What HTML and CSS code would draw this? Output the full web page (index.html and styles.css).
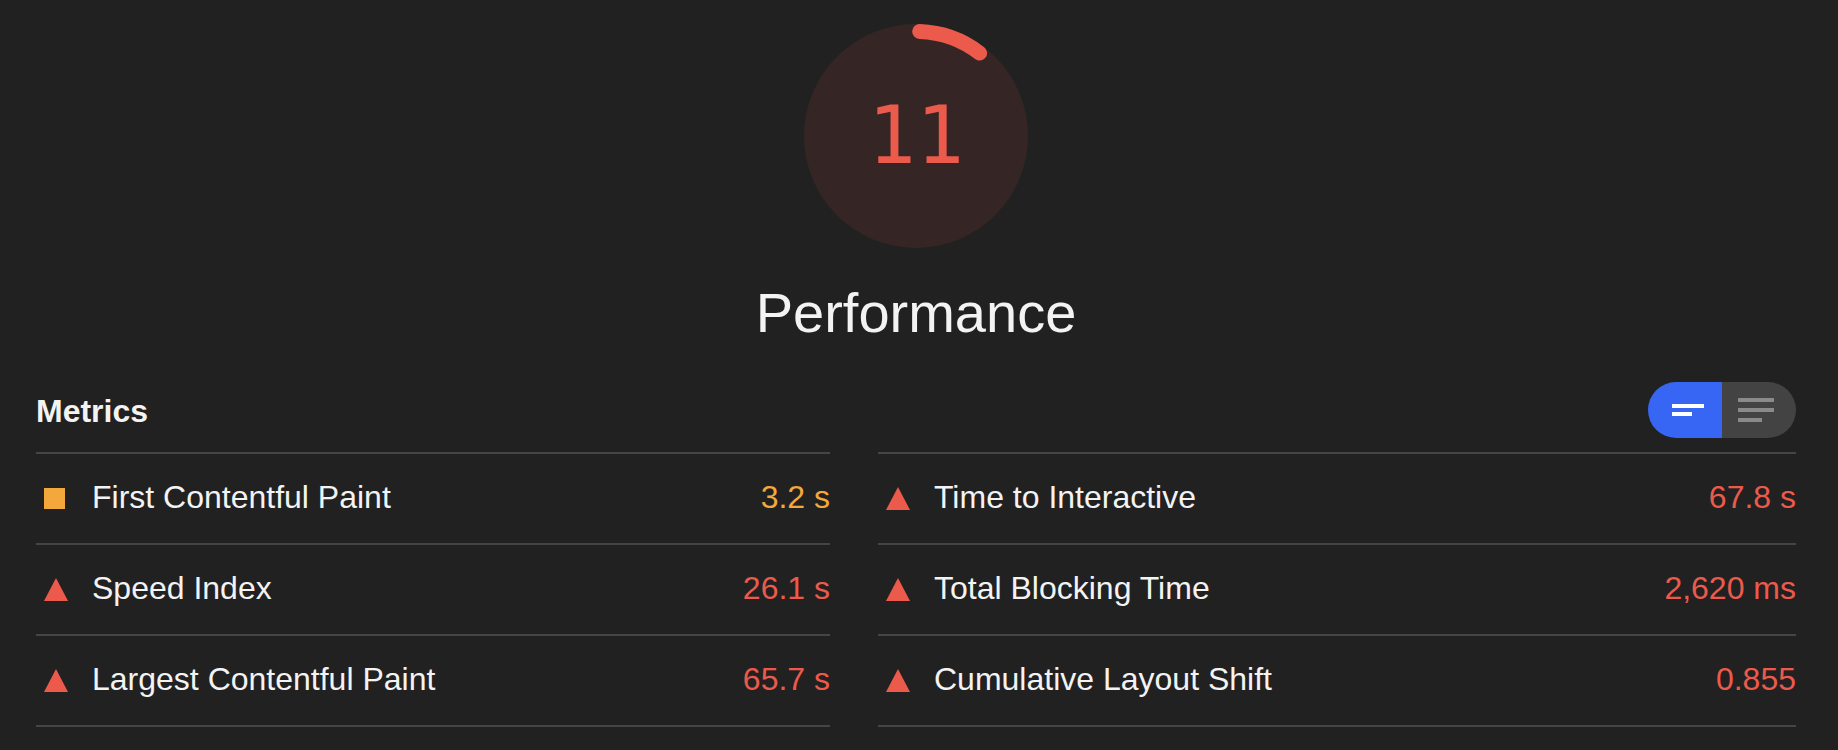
FILE: index.html
```
<!DOCTYPE html>
<html lang="en">
<head>
<meta charset="utf-8">
<title>Performance</title>
<link rel="stylesheet" href="styles.css">
</head>
<body>
<div class="report">
  <div class="gauge">
    <svg class="gauge-svg" viewBox="0 0 120 120" width="224" height="224">
      <circle cx="60" cy="60" r="60" class="gauge-base"/>
      <path d="M61.95 4.03 A56 56 0 0 1 94.09 15.57" class="gauge-arc"/>
    </svg>
    <div class="gauge-score">11</div>
  </div>
  <h1 class="title">Performance</h1>
  <div class="metrics-header">
    <h2 class="metrics-title">Metrics</h2>
    <div class="toggle">
      <div class="toggle-half toggle-on">
        <svg width="32" height="12" viewBox="0 0 32 12"><rect x="0" y="0" width="32" height="4" fill="#fff"/><rect x="0" y="8" width="20" height="4" fill="#fff"/></svg>
      </div>
      <div class="toggle-half toggle-off">
        <svg width="36" height="24" viewBox="0 0 36 24"><rect x="0" y="0" width="36" height="4" fill="#8a8a8a"/><rect x="0" y="10" width="36" height="4" fill="#8a8a8a"/><rect x="0" y="20" width="24" height="4" fill="#8a8a8a"/></svg>
      </div>
    </div>
  </div>
  <div class="metrics">
    <div class="metrics-col">
      <div class="metric">
        <span class="metric-icon"><span class="square"></span></span>
        <span class="metric-label">First Contentful Paint</span>
        <span class="metric-value average">3.2 s</span>
      </div>
      <div class="metric">
        <span class="metric-icon"><svg class="triangle" width="24" height="23" viewBox="0 0 24 23"><polygon points="12,0 24,23 0,23"/></svg></span>
        <span class="metric-label">Speed Index</span>
        <span class="metric-value fail">26.1 s</span>
      </div>
      <div class="metric">
        <span class="metric-icon"><svg class="triangle" width="24" height="23" viewBox="0 0 24 23"><polygon points="12,0 24,23 0,23"/></svg></span>
        <span class="metric-label">Largest Contentful Paint</span>
        <span class="metric-value fail">65.7 s</span>
      </div>
    </div>
    <div class="metrics-col">
      <div class="metric">
        <span class="metric-icon"><svg class="triangle" width="24" height="23" viewBox="0 0 24 23"><polygon points="12,0 24,23 0,23"/></svg></span>
        <span class="metric-label">Time to Interactive</span>
        <span class="metric-value fail">67.8 s</span>
      </div>
      <div class="metric">
        <span class="metric-icon"><svg class="triangle" width="24" height="23" viewBox="0 0 24 23"><polygon points="12,0 24,23 0,23"/></svg></span>
        <span class="metric-label">Total Blocking Time</span>
        <span class="metric-value fail">2,620 ms</span>
      </div>
      <div class="metric">
        <span class="metric-icon"><svg class="triangle" width="24" height="23" viewBox="0 0 24 23"><polygon points="12,0 24,23 0,23"/></svg></span>
        <span class="metric-label">Cumulative Layout Shift</span>
        <span class="metric-value fail">0.855</span>
      </div>
    </div>
  </div>
</div>
</body>
</html>
```
FILE: styles.css
```
html, body {
  margin: 0;
  padding: 0;
  background: #212121;
}
body {
  font-family: "Liberation Sans", Arial, sans-serif;
  color: #f3f3f3;
}
.report {
  width: 1760px;
  margin-left: 36px;
  padding-top: 24px;
}
.gauge {
  display: grid;
  place-items: center;
  width: 224px;
  height: 224px;
  margin: 0 auto;
}
.gauge > * {
  grid-area: 1 / 1;
}
.gauge-svg {
  display: block;
}
.gauge-base {
  fill: #ec5a4c;
  opacity: 0.1;
}
.gauge-arc {
  fill: none;
  stroke: #ec5a4c;
  stroke-width: 8;
  stroke-linecap: round;
}
.gauge-score {
  font-family: "DejaVu Sans Mono", monospace;
  font-size: 80px;
  line-height: 80px;
  color: #ec5a4c;
}
.title {
  margin: 33px 0 0;
  font-size: 56px;
  line-height: 64px;
  font-weight: 400;
  text-align: center;
}
.metrics-header {
  display: flex;
  justify-content: space-between;
  align-items: center;
  height: 56px;
  margin-top: 37px;
}
.metrics-title {
  margin: 0;
  font-size: 32px;
  line-height: 56px;
  font-weight: 700;
  padding-top: 1px;
}
.toggle {
  display: flex;
  height: 56px;
}
.toggle-half {
  display: flex;
  align-items: center;
  height: 56px;
  box-sizing: border-box;
}
.toggle-on {
  width: 74px;
  padding-left: 24px;
  background: #3766f4;
  border-radius: 28px 0 0 28px;
}
.toggle-off {
  width: 74px;
  padding-left: 16px;
  background: #434343;
  border-radius: 0 28px 28px 0;
}
.toggle-half svg {
  display: block;
}
.metrics {
  display: grid;
  grid-template-columns: 794px 918px;
  column-gap: 48px;
  margin-top: 14px;
}
.metrics-col {
  border-top: 2px solid #454545;
}
.metric {
  display: flex;
  align-items: center;
  height: 91px;
  box-sizing: border-box;
  border-bottom: 2px solid #454545;
  padding-bottom: 4px;
  font-size: 32px;
  line-height: 40px;
}
.metric-icon {
  display: flex;
  align-items: center;
  width: 24px;
  margin-left: 8px;
  margin-right: 24px;
  margin-top: 3px;
}
.square {
  display: block;
  width: 21px;
  height: 21px;
  background: #f4a83b;
}
.triangle {
  display: block;
  fill: #ec5a4c;
}
.metric-label {
  flex: 1;
}
.metric-value {
  text-align: right;
}
.average {
  color: #f4a83b;
}
.fail {
  color: #ec5a4c;
}
```
